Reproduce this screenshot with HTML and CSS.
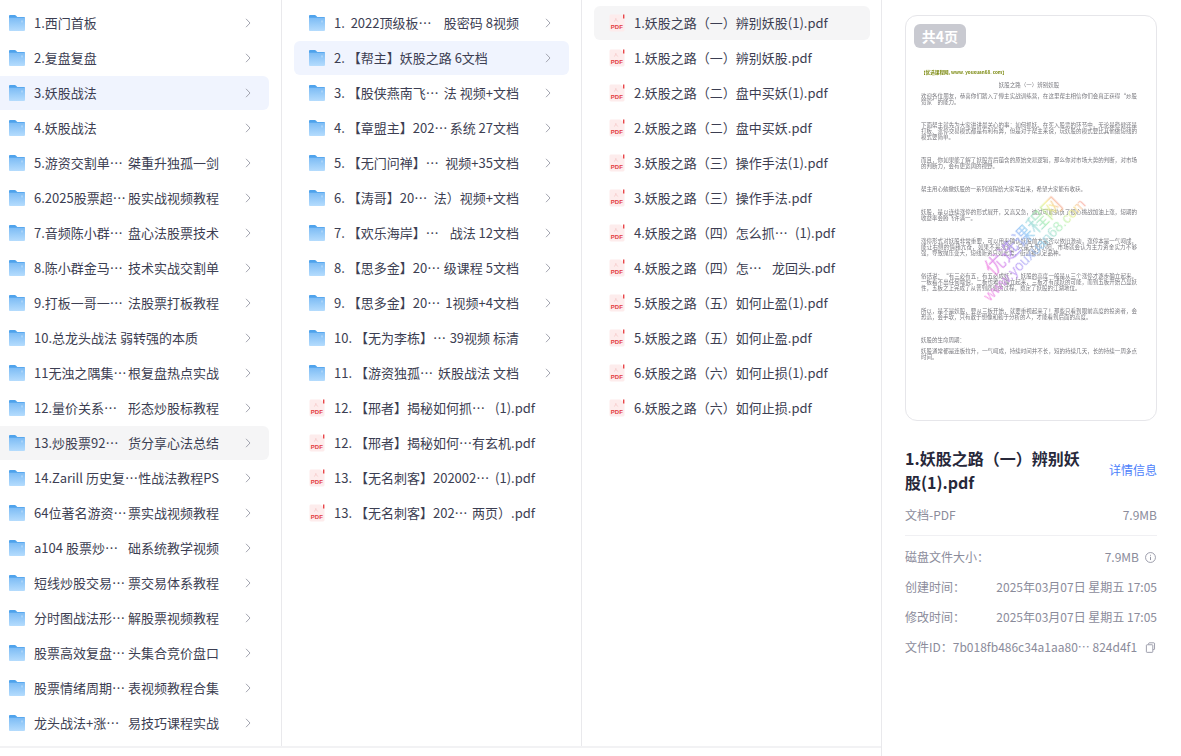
FILE: index.html
```html
<!DOCTYPE html>
<html lang="zh-CN">
<head>
<meta charset="utf-8">
<title>文件浏览</title>
<link rel="stylesheet" href="styles.css">
</head>
<body>
<svg class="defs" width="0" height="0" aria-hidden="true">
  <defs>
    <linearGradient id="fg" x1="0" y1="0" x2="0" y2="1"><stop offset="0" stop-color="#7dbcf5"/><stop offset="1" stop-color="#b5dcfd"/></linearGradient>
    <symbol id="folder" viewBox="0 0 18 16">
      <path d="M1 1.200C1 .5 1.500 0 2.200 0h4.600c.5 0 .8.2 1.100.5L9.300 2H15.800c.7 0 1.200.5 1.200 1.200V7H1z" fill="#4fa3ec"/>
      <path d="M1 2.800h16v12.300c0 .5-.4.900-.9.900H1.900c-.5 0-.9-.4-.9-.9z" fill="url(#fg)"/>
      <rect x="13" y="5.500" width="2" height="2" fill="#a9d3f8"/>
    </symbol>
    <symbol id="pdf" viewBox="0 0 16 18">
      <path d="M1.800.5h9.400L15.500 4v12c0 .8-.6 1.400-1.400 1.400H1.800c-.7 0-1.300-.6-1.300-1.400V1.900C.5 1.100 1.100.5 1.800.5z" fill="#fdecec"/>
      <path d="M14 .6h1.400v4H14z" fill="#e8474a"/>
      <path d="M5 7.600c1-.4 1.600-1.800 1.800-3.200.3 1.600 1.400 2.700 2.400 3.200" fill="none" stroke="#f3c4c4" stroke-width=".7"/>
      <text x="1.800" y="14.600" class="pdf-label">PDF</text>
    </symbol>
    <symbol id="chev" viewBox="0 0 6 10">
      <path d="M1 .8 5 5 1 9.200" fill="none" stroke="#a3a5b0" stroke-width="1"/>
    </symbol>
  </defs>
</svg>
<div class="app">
  <div class="browser">
    <div class="columns">
      <section class="col">
        <div class="row"><svg class="ico"><use href="#folder"/></svg><span class="name">1.西门首板</span><svg class="chev"><use href="#chev"/></svg></div>
        <div class="row"><svg class="ico"><use href="#folder"/></svg><span class="name">2.复盘复盘</span><svg class="chev"><use href="#chev"/></svg></div>
        <div class="row active"><svg class="ico"><use href="#folder"/></svg><span class="name">3.妖股战法</span><svg class="chev"><use href="#chev"/></svg></div>
        <div class="row"><svg class="ico"><use href="#folder"/></svg><span class="name">4.妖股战法</span><svg class="chev"><use href="#chev"/></svg></div>
        <div class="row"><svg class="ico"><use href="#folder"/></svg><span class="name split"><span>5.游资交割单…</span><span>桀重升独孤一剑</span></span><svg class="chev"><use href="#chev"/></svg></div>
        <div class="row"><svg class="ico"><use href="#folder"/></svg><span class="name split"><span>6.2025股票超…</span><span>股实战视频教程</span></span><svg class="chev"><use href="#chev"/></svg></div>
        <div class="row"><svg class="ico"><use href="#folder"/></svg><span class="name split"><span>7.音频陈小群…</span><span>盘心法股票技术</span></span><svg class="chev"><use href="#chev"/></svg></div>
        <div class="row"><svg class="ico"><use href="#folder"/></svg><span class="name split"><span>8.陈小群金马…</span><span>技术实战交割单</span></span><svg class="chev"><use href="#chev"/></svg></div>
        <div class="row"><svg class="ico"><use href="#folder"/></svg><span class="name split"><span>9.打板一哥一…</span><span>法股票打板教程</span></span><svg class="chev"><use href="#chev"/></svg></div>
        <div class="row"><svg class="ico"><use href="#folder"/></svg><span class="name">10.总龙头战法 弱转强的本质</span><svg class="chev"><use href="#chev"/></svg></div>
        <div class="row"><svg class="ico"><use href="#folder"/></svg><span class="name split"><span>11无浊之隅集…</span><span>根复盘热点实战</span></span><svg class="chev"><use href="#chev"/></svg></div>
        <div class="row"><svg class="ico"><use href="#folder"/></svg><span class="name split"><span>12.量价关系…</span><span>形态炒股标教程</span></span><svg class="chev"><use href="#chev"/></svg></div>
        <div class="row hover"><svg class="ico"><use href="#folder"/></svg><span class="name split"><span>13.炒股票92…</span><span>货分享心法总结</span></span><svg class="chev"><use href="#chev"/></svg></div>
        <div class="row"><svg class="ico"><use href="#folder"/></svg><span class="name split"><span>14.Zarill 历史复…</span><span>性战法教程PS</span></span><svg class="chev"><use href="#chev"/></svg></div>
        <div class="row"><svg class="ico"><use href="#folder"/></svg><span class="name split"><span>64位著名游资…</span><span>票实战视频教程</span></span><svg class="chev"><use href="#chev"/></svg></div>
        <div class="row"><svg class="ico"><use href="#folder"/></svg><span class="name split"><span>a104 股票炒…</span><span>础系统教学视频</span></span><svg class="chev"><use href="#chev"/></svg></div>
        <div class="row"><svg class="ico"><use href="#folder"/></svg><span class="name split"><span>短线炒股交易…</span><span>票交易体系教程</span></span><svg class="chev"><use href="#chev"/></svg></div>
        <div class="row"><svg class="ico"><use href="#folder"/></svg><span class="name split"><span>分时图战法形…</span><span>解股票视频教程</span></span><svg class="chev"><use href="#chev"/></svg></div>
        <div class="row"><svg class="ico"><use href="#folder"/></svg><span class="name split"><span>股票高效复盘…</span><span>头集合竞价盘口</span></span><svg class="chev"><use href="#chev"/></svg></div>
        <div class="row"><svg class="ico"><use href="#folder"/></svg><span class="name split"><span>股票情绪周期…</span><span>表视频教程合集</span></span><svg class="chev"><use href="#chev"/></svg></div>
        <div class="row"><svg class="ico"><use href="#folder"/></svg><span class="name split"><span>龙头战法+涨…</span><span>易技巧课程实战</span></span><svg class="chev"><use href="#chev"/></svg></div>
      </section>
      <section class="col">
        <div class="row"><svg class="ico"><use href="#folder"/></svg><span class="name split"><span>1.&nbsp; 2022顶级板…</span><span>股密码 8视频</span></span><svg class="chev"><use href="#chev"/></svg></div>
        <div class="row active"><svg class="ico"><use href="#folder"/></svg><span class="name">2. 【帮主】妖股之路 6文档</span><svg class="chev"><use href="#chev"/></svg></div>
        <div class="row"><svg class="ico"><use href="#folder"/></svg><span class="name split"><span>3. 【股侠燕南飞…</span><span>法 视频+文档</span></span><svg class="chev"><use href="#chev"/></svg></div>
        <div class="row"><svg class="ico"><use href="#folder"/></svg><span class="name split"><span>4. 【章盟主】202…</span><span>系统 27文档</span></span><svg class="chev"><use href="#chev"/></svg></div>
        <div class="row"><svg class="ico"><use href="#folder"/></svg><span class="name split"><span>5. 【无门问禅】…</span><span>视频+35文档</span></span><svg class="chev"><use href="#chev"/></svg></div>
        <div class="row"><svg class="ico"><use href="#folder"/></svg><span class="name split"><span>6. 【涛哥】20…</span><span>法）视频+文档</span></span><svg class="chev"><use href="#chev"/></svg></div>
        <div class="row"><svg class="ico"><use href="#folder"/></svg><span class="name split"><span>7. 【欢乐海岸】…</span><span>战法 12文档</span></span><svg class="chev"><use href="#chev"/></svg></div>
        <div class="row"><svg class="ico"><use href="#folder"/></svg><span class="name split"><span>8. 【思多金】20…</span><span>级课程 5文档</span></span><svg class="chev"><use href="#chev"/></svg></div>
        <div class="row"><svg class="ico"><use href="#folder"/></svg><span class="name split"><span>9. 【思多金】20…</span><span>1视频+4文档</span></span><svg class="chev"><use href="#chev"/></svg></div>
        <div class="row"><svg class="ico"><use href="#folder"/></svg><span class="name split"><span>10. 【无为李栋】…</span><span>39视频 标清</span></span><svg class="chev"><use href="#chev"/></svg></div>
        <div class="row"><svg class="ico"><use href="#folder"/></svg><span class="name split"><span>11. 【游资独孤…</span><span>妖股战法 文档</span></span><svg class="chev"><use href="#chev"/></svg></div>
        <div class="row"><svg class="ico file"><use href="#pdf"/></svg><span class="name split wide"><span>12. 【邢者】揭秘如何抓…</span><span>(1).pdf</span></span></div>
        <div class="row"><svg class="ico file"><use href="#pdf"/></svg><span class="name split wide"><span>12. 【邢者】揭秘如何…</span><span>有玄机.pdf</span></span></div>
        <div class="row"><svg class="ico file"><use href="#pdf"/></svg><span class="name split wide"><span>13. 【无名刺客】202002…</span><span>(1).pdf</span></span></div>
        <div class="row"><svg class="ico file"><use href="#pdf"/></svg><span class="name split wide"><span>13. 【无名刺客】202…</span><span>两页）.pdf</span></span></div>
      </section>
      <section class="col last">
        <div class="row hover"><svg class="ico file"><use href="#pdf"/></svg><span class="name">1.妖股之路（一）辨别妖股(1).pdf</span></div>
        <div class="row"><svg class="ico file"><use href="#pdf"/></svg><span class="name">1.妖股之路（一）辨别妖股.pdf</span></div>
        <div class="row"><svg class="ico file"><use href="#pdf"/></svg><span class="name">2.妖股之路（二）盘中买妖(1).pdf</span></div>
        <div class="row"><svg class="ico file"><use href="#pdf"/></svg><span class="name">2.妖股之路（二）盘中买妖.pdf</span></div>
        <div class="row"><svg class="ico file"><use href="#pdf"/></svg><span class="name">3.妖股之路（三）操作手法(1).pdf</span></div>
        <div class="row"><svg class="ico file"><use href="#pdf"/></svg><span class="name">3.妖股之路（三）操作手法.pdf</span></div>
        <div class="row"><svg class="ico file"><use href="#pdf"/></svg><span class="name split wide"><span>4.妖股之路（四）怎么抓…</span><span>(1).pdf</span></span></div>
        <div class="row"><svg class="ico file"><use href="#pdf"/></svg><span class="name split wide"><span>4.妖股之路（四）怎…</span><span>龙回头.pdf</span></span></div>
        <div class="row"><svg class="ico file"><use href="#pdf"/></svg><span class="name">5.妖股之路（五）如何止盈(1).pdf</span></div>
        <div class="row"><svg class="ico file"><use href="#pdf"/></svg><span class="name">5.妖股之路（五）如何止盈.pdf</span></div>
        <div class="row"><svg class="ico file"><use href="#pdf"/></svg><span class="name">6.妖股之路（六）如何止损(1).pdf</span></div>
        <div class="row"><svg class="ico file"><use href="#pdf"/></svg><span class="name">6.妖股之路（六）如何止损.pdf</span></div>
      </section>
    </div>
    <div class="foot"></div>
  </div>
  <aside class="panel">
    <div class="preview">
      <span class="badge">共4页</span>
      <div class="doc">
        <p class="brand">【优选课程网, www. youxuan68. com】</p>
        <p class="doc-title">妖股之路（一）辨别妖股</p>
        <p class="near">欢迎各位朋友，恭喜你们踏入了傅主实战训练营，在这里帮主相信你们会真正获得“炒股赞家”的能力。</p>
        <p>下面帮主就先为大家讲讲最关心的事：如何抓妖。在买入股票的环节中，无论是稳健还是打板、涨停交易模式都是有利有弊，但是对于帮主来说，玩妖股的模式要比其他做短线的模式要简单。</p>
        <p>而且，你如果能了解了妖股背后蕴含的原始交易逻辑，那么你对市场大势的判断，对市场的判断力，会有更宽阔的视野。</p>
        <p>帮主用心勉撒妖股的一系列流程给大家写出来，希望大家能有收获。</p>
        <p>妖股，是以连续涨停的形式展开，又高又急，迪过可能执负了很心挑战加油上涨，短期的收益率会腾飞许满一。</p>
        <p>涨停形式对妖股非常重要，可以用来确认妖股前方是否以依旧激动，涨停本是一气呵成，能让右侧的情绪亢奋，如果不是涨停，只是大阳小阳，市场就会认为主力资金实力不够强，导致抛压变大，短线新资只如此类，街道被认定品种。</p>
        <p>俗话说：“有三必有五，有五必成妖”，妖股的高度一般是从三个涨停才逐步确立起来。一板看不出任何端倪，二板也难以确立起来，三板才有成妖的可能，而到五板开始凸显妖性，五板之上完成了从普到质变的过程，奠定了妖股的江湖地位。</p>
        <p>所以，是不是妖股，要从三板开始，就要重视起来了！那些只看到眼前高度的投资者，会恐高，会手软，只有敢于想像和勤于分析的人，才能看到后面的高度。</p>
        <p>妖股的生命周期：</p>
        <p class="near">妖股通常都是连板拉升，一气呵成，持续时间并不长，短的持续几天，长的持续一周多点时间。</p>
      </div>
      <div class="mark mark-cn">优选课程网</div>
      <div class="mark mark-en">www.youxuan68.com</div>
    </div>
    <div class="title-row">
      <h1 class="title">1.妖股之路（一）辨别妖股(1).pdf</h1>
      <a class="detail">详情信息</a>
    </div>
    <div class="meta first"><span>文档-PDF</span><span>7.9MB</span></div>
    <div class="divider"></div>
    <dl class="facts">
      <div class="meta"><dt>磁盘文件大小：</dt><dd>7.9MB<svg class="mini" viewBox="0 0 12 12"><circle cx="6" cy="6" r="5.400" fill="none" stroke="#8b8c9b" stroke-width=".9"/><path d="M6 5.200v3.600M6 3.100v1" stroke="#8b8c9b" stroke-width="1" fill="none"/></svg></dd></div>
      <div class="meta"><dt>创建时间：</dt><dd>2025年03月07日 星期五 17:05</dd></div>
      <div class="meta"><dt>修改时间：</dt><dd>2025年03月07日 星期五 17:05</dd></div>
      <div class="meta"><dt>文件ID：7b018fb486c34a1aa80… 824d4f1</dt><dd><svg class="mini" viewBox="0 0 12 12"><path d="M4 2.500V1.600c0-.4.300-.7.700-.7h5c.4 0 .7.300.7.700v6c0 .4-.3.700-.7.700h-1" fill="none" stroke="#8b8c9b" stroke-width=".9"/><rect x="1.500" y="3" width="7" height="8.300" rx=".8" fill="none" stroke="#8b8c9b" stroke-width=".9"/></svg></dd></div>
    </dl>
  </aside>
</div>
</body>
</html>
```

FILE: styles.css
```css
* { box-sizing: border-box; }
html, body { margin: 0; height: 100%; background: #fff; overflow: hidden; }
body { font-family: "Noto Sans CJK SC", "Noto Sans", sans-serif; color: #3c3e52; }
.defs { position: absolute; }
.pdf-label { font: 700 6px "Liberation Sans", sans-serif; fill: #e33b3f; }

.app { display: flex; height: 756px; width: 1181px; }
.browser { width: 882px; flex: none; border-right: 1px solid #e9e9ec; overflow: hidden; display: flex; flex-direction: column; }
.columns { display: flex; height: 746px; margin-left: -18px; width: 900px; flex: none; }
.foot { border-top: 2px solid #f2f2f4; height: 10px; }

.col { width: 300px; flex: none; padding: 6px 12px 0; display: flex; flex-direction: column; gap: 1px; border-right: 1px solid #e9e9ec; overflow: hidden; }
.col.last { border-right: 0; }
.row { height: 34px; flex: none; display: flex; align-items: center; padding: 0 18px 0 14px; border-radius: 6px; font-size: 13px; line-height: 20px; }
.row.active { background: #f0f4fe; }
.row.hover { background: #f5f5f6; }
.ico { width: 18px; height: 16px; flex: none; margin-right: 8px; }
.ico.file { width: 16px; height: 18px; margin: 0 9px 0 1px; }
.name { white-space: nowrap; min-width: 0; }
.name.split { display: flex; justify-content: space-between; width: 185px; flex: none; }
.name.split.wide { width: 201px; }
.chev { width: 6px; height: 10px; flex: none; margin-left: auto; }

.panel { flex: 1; padding: 15px 24px 0 23px; min-width: 0; }
.preview { position: relative; height: 406px; border: 1px solid #e6e6ea; border-radius: 12px; overflow: hidden; padding: 53px 19px 0 15px; }
.badge { position: absolute; left: 8px; top: 8px; width: 52px; height: 24px; border-radius: 6px; background: #c9cad1; color: #fff; font-size: 14px; font-weight: 700; line-height: 24px; text-align: center; }
.doc { font-size: 5.5px; line-height: 6px; color: #77777d; filter: blur(.4px); text-align: justify; }
.doc p { margin: 17px 0 0; }
.doc p.near { margin-top: 5px; }
.doc p.brand { margin: 0; color: #7c8a10; font-weight: 700; font-size: 4.6px; }
.doc p.doc-title { margin-top: 7px; text-align: center; }
.mark { position: absolute; white-space: nowrap; opacity: .8; transform: rotate(-45deg); background: linear-gradient(90deg, #f77be0, #b58cf5 30%, #8cc8f5 55%, #a8f0a8 78%, #f5ee80 90%, #f7a0a0); -webkit-background-clip: text; background-clip: text; color: transparent; filter: blur(.35px); }
.mark-cn { left: 67px; top: 208px; font-size: 20px; line-height: 24px; }
.mark-en { left: 60px; top: 225px; font-size: 14.5px; line-height: 18px; font-family: "Liberation Sans", sans-serif; }

.title-row { display: flex; align-items: center; justify-content: space-between; gap: 20px; margin-top: 25px; }
.title { margin: 0; width: 180px; font-size: 16px; line-height: 24px; font-weight: 700; color: #27283a; word-break: break-all; }
.detail { font-size: 12px; line-height: 18px; color: #4d7ffb; flex: none; }
.meta { display: flex; justify-content: space-between; align-items: center; font-size: 12px; line-height: 18px; color: #8b8c9b; }
.meta.first { margin-top: 12px; }
.divider { height: 1px; background: #f0f0f3; margin: 11px 0 0; }
.facts { margin: 12px 0 0; display: flex; flex-direction: column; gap: 12px; }
.facts dt, .facts dd { margin: 0; }
.facts dd { display: flex; align-items: center; gap: 6px; }
.mini { width: 11px; height: 11px; flex: none; margin-right: 1px; }
```
